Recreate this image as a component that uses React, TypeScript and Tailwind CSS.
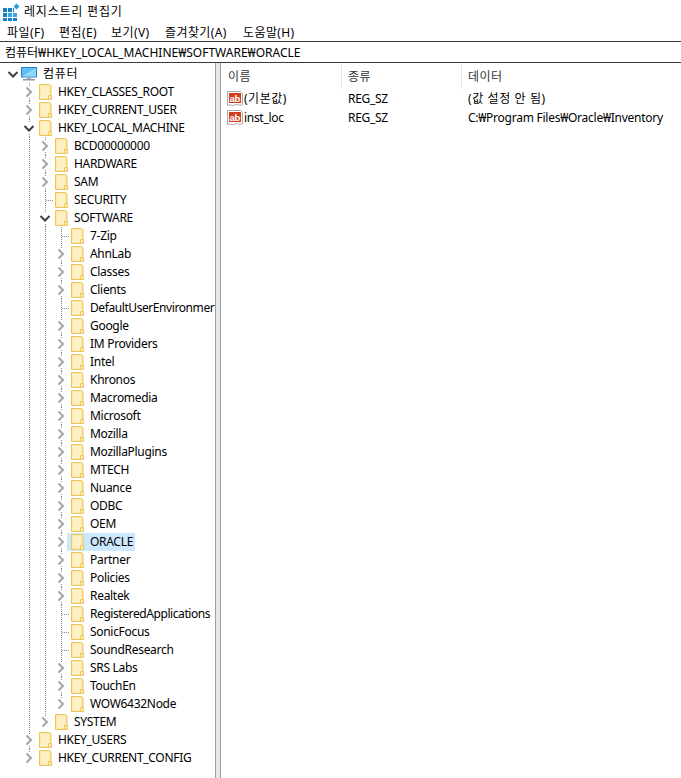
const FONT = "font-['Noto_Sans','Noto_Sans_CJK_KR',sans-serif]";

type Node = { name: string; open?: boolean; selected?: boolean; leaf?: boolean; tight?: boolean; children?: Node[] };

const softwareKeys: Node[] = [
  { name: "7-Zip", leaf: true },
  { name: "AhnLab" },
  { name: "Classes" },
  { name: "Clients" },
  { name: "DefaultUserEnvironmer", leaf: true, tight: true },
  { name: "Google" },
  { name: "IM Providers" },
  { name: "Intel" },
  { name: "Khronos" },
  { name: "Macromedia" },
  { name: "Microsoft" },
  { name: "Mozilla" },
  { name: "MozillaPlugins" },
  { name: "MTECH" },
  { name: "Nuance" },
  { name: "ODBC" },
  { name: "OEM" },
  { name: "ORACLE", selected: true },
  { name: "Partner" },
  { name: "Policies" },
  { name: "Realtek" },
  { name: "RegisteredApplications", leaf: true, tight: true },
  { name: "SonicFocus", leaf: true },
  { name: "SoundResearch", leaf: true },
  { name: "SRS Labs" },
  { name: "TouchEn" },
  { name: "WOW6432Node" },
];

const tree: Node[] = [
  { name: "HKEY_CLASSES_ROOT" },
  { name: "HKEY_CURRENT_USER" },
  {
    name: "HKEY_LOCAL_MACHINE",
    open: true,
    children: [
      { name: "BCD00000000" },
      { name: "HARDWARE" },
      { name: "SAM" },
      { name: "SECURITY", leaf: true },
      { name: "SOFTWARE", open: true, children: softwareKeys },
      { name: "SYSTEM" },
    ],
  },
  { name: "HKEY_USERS" },
  { name: "HKEY_CURRENT_CONFIG" },
];

function FolderIcon() {
  return (
    <svg width="13" height="16" viewBox="0 0 13 16" className="shrink-0">
      <path d="M.5.5h10l1.500 1v14H.5z" fill="#fde8a6" stroke="#ecc65e" />
      <path d="M2 2h8v12H2z" fill="#fff1c4" />
      <path d="M9.500 15.500v-4h3v4z" fill="#fde8a6" stroke="#ecc65e" />
    </svg>
  );
}

function MonitorIcon() {
  return (
    <svg width="16" height="14" viewBox="0 0 16 14" className="shrink-0">
      <rect x="0" y="0" width="16" height="10.500" fill="#2f7fc4" />
      <rect x="1" y="1" width="14" height="8.500" fill="#5cc0f2" />
      <path d="M1 9.500 15 1v8.500z" fill="#8fd8f8" />
      <rect x="6" y="10.500" width="4" height="1.500" fill="#9aa7b3" />
      <rect x="2" y="12" width="12" height="1.500" fill="#8d99a6" />
    </svg>
  );
}

function RegValueIcon() {
  return (
    <svg width="16" height="16" viewBox="0 0 16 16" className="shrink-0">
      <path d="M.5.5h13l2 2v11c-2 1.500-3 .5-5 0s-3 1.500-5 1-3-1-5 0z" fill="#fff" stroke="#a8a8a8" />
      <rect x="2" y="2" width="12" height="10" fill="#d13f1a" />
      <text x="2.500" y="10.500" fontSize="9.500" fontWeight="700" fill="#fff" fontFamily="Liberation Sans, sans-serif">ab</text>
    </svg>
  );
}

function RegeditIcon() {
  return (
    <svg width="18" height="18" viewBox="0 0 18 18" className="shrink-0">
      <path d="M1 5h4v4H1zM6 5h4v4H6zM1 10h4v4H1zM1 15h4v3H1zM6 15h4v3H6zM11 15h4v3h-4z" fill="#1580c8" />
      <path d="M6 10h4v4H6zM11 10h4v4h-4z" fill="#38a6e6" />
      <path d="M11 5h1v4h-1z" fill="#1580c8" />
      <path d="M14.500 .5 17.500 3.500 14.500 6.500 11.500 3.500z" fill="#2a9bdc" />
    </svg>
  );
}

// One dotted indent column; nothing, a straight guide, or the branch to a child
function Guide({ through, branch, last }: { through?: boolean; branch?: boolean; last?: boolean }) {
  return (
    <svg width="16" height="18" className="shrink-0">
      {through && <line x1="8.500" y1="0" x2="8.500" y2="18" stroke="#8a8a8a" strokeDasharray="1 1" />}
      {branch && <line x1="8.500" y1="0" x2="8.500" y2={last ? 9 : 18} stroke="#8a8a8a" strokeDasharray="1 1" />}
      {branch && <line x1="9" y1="9.500" x2="16" y2="9.500" stroke="#8a8a8a" strokeDasharray="1 1" />}
    </svg>
  );
}

function Chevron({ open, last, root }: { open?: boolean; last?: boolean; root?: boolean }) {
  return (
    <svg width="16" height="18" className="shrink-0">
      {!root && <line x1="8.500" y1="0" x2="8.500" y2="3" stroke="#8a8a8a" strokeDasharray="1 1" />}
      {!root && !last && <line x1="8.500" y1="15" x2="8.500" y2="18" stroke="#8a8a8a" strokeDasharray="1 1" />}
      {open ? (
        <path d="M3.500 7 8 11.500 12.500 7" fill="none" stroke="#404040" strokeWidth="2" />
      ) : (
        <path d="M5.500 4.500 10 9 5.500 13.500" fill="none" stroke="#a6a6a6" strokeWidth="2" />
      )}
    </svg>
  );
}

function TreeRows({ nodes, guides }: { nodes: Node[]; guides: boolean[] }) {
  return (
    <>
      {nodes.map((node, i) => {
        const last = i === nodes.length - 1;
        return (
          <div key={node.name}>
            <div className="flex h-[18px] items-center">
              {guides.map((on, g) => (
                <Guide key={g} through={on} />
              ))}
              {node.leaf ? <Guide branch last={last} /> : <Chevron open={node.open} last={last} />}
              <div
                className={`ml-[-2px] flex h-[18px] items-center gap-[6px] pl-1 pr-[2px] ${
                  node.selected ? "bg-[#cce8ff]" : ""
                }`}
              >
                <FolderIcon />
                <span className={`whitespace-nowrap ${node.tight ? "tracking-[-0.42px]" : "tracking-[-0.3px]"}`}>
                  {node.name}
                </span>
              </div>
            </div>
            {node.children && <TreeRows nodes={node.children} guides={[...guides, !last]} />}
          </div>
        );
      })}
    </>
  );
}

const menus = [
  { label: "파일(F)", width: "w-[52px]" },
  { label: "편집(E)", width: "w-[52px]" },
  { label: "보기(V)", width: "w-[54px]" },
  { label: "즐겨찾기(A)", width: "w-[78px]" },
  { label: "도움말(H)", width: "w-[60px]" },
];

const values = [
  { name: "(기본값)", nameClass: "tracking-[0.5px]", type: "REG_SZ", data: "(값 설정 안 됨)", dataClass: "tracking-[0.6px]" },
  { name: "inst_loc", nameClass: "", type: "REG_SZ", data: "C:₩Program Files₩Oracle₩Inventory", dataClass: "tracking-[-0.25px]" },
];

export default function App() {
  return (
    <div className={`flex h-[778px] w-[681px] flex-col overflow-hidden bg-white text-xs text-black ${FONT}`}>
      <div className="flex h-[23px] items-center gap-[4px] pl-[2px]">
        <RegeditIcon />
        <span className="tracking-[0.8px]">레지스트리 편집기</span>
      </div>

      <div className="flex h-[18px] items-center pl-[7px] pt-[2px] tracking-[0.4px]">
        {menus.map((menu) => (
          <span key={menu.label} className={`${menu.width} whitespace-nowrap`}>
            {menu.label}
          </span>
        ))}
      </div>

      <div className="flex h-[22px] items-center border-y border-[#3a3a3a] pl-[5px] pt-[1px]">
        컴퓨터₩HKEY_LOCAL_MACHINE₩SOFTWARE₩ORACLE
      </div>

      <div className="flex min-h-0 flex-1">
        <div className="w-[215px] shrink-0 overflow-hidden pl-[5px] pt-[2px]">
          <div className="flex h-[18px] items-center">
            <Chevron open root />
            <MonitorIcon />
            <span className="ml-[6px] tracking-[0.7px]">컴퓨터</span>
          </div>
          <TreeRows nodes={tree} guides={[false]} />
        </div>

        <div className="w-[6px] shrink-0 border-x border-[#a0a0a0] bg-[#e6e6e6]" />

        <div className="min-w-0 flex-1 pt-[1px]">
          <div className="flex h-[25px] items-center tracking-[0.5px] text-[#333333]">
            <div className="flex h-full w-[121px] items-center border-r border-[#e5e5e5] pl-[7px]">이름</div>
            <div className="flex h-full w-[120px] items-center border-r border-[#e5e5e5] pl-[6px]">종류</div>
            <div className="flex h-full items-center pl-[6px]">데이터</div>
          </div>
          {values.map((value) => (
            <div key={value.name} className="flex h-[19px] items-center whitespace-nowrap tracking-[-0.3px]">
              <div className="flex w-[121px] items-center gap-[1px] pl-[6px]">
                <RegValueIcon />
                <span className={value.nameClass}>{value.name}</span>
              </div>
              <div className="w-[120px] pl-[6px]">{value.type}</div>
              <div className={`pl-[6px] ${value.dataClass}`}>{value.data}</div>
            </div>
          ))}
        </div>
      </div>
    </div>
  );
}
